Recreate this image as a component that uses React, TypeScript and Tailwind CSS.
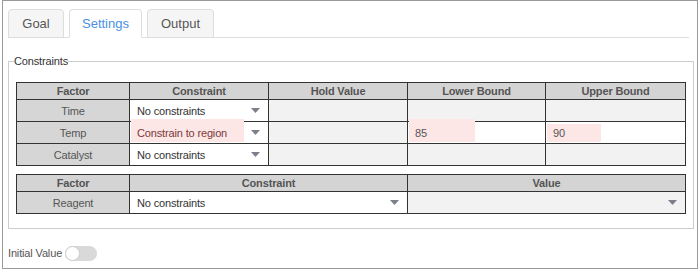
const Arrow = () => (
  <svg width="9" height="5" viewBox="0 0 9 5" className="shrink-0">
    <path d="M0 0 L9 0 L4.5 5 Z" fill="#7a7f8a" />
  </svg>
);

const SelectCell = ({ value, error }: { value: string; error?: boolean }) => (
  <td className="border border-[#333] bg-white p-0 h-[22px]">
    <div className="relative flex items-center justify-between h-full pl-[7px] pr-[8px]">
      {error && <div className="absolute left-[1px] top-[-3px] bottom-[1px] w-[113px] bg-[#fde6e6]" />}
      <span className={`relative ${error ? "text-[#7a3a3a]" : "text-[#333]"}`}>{value}</span>
      <Arrow />
    </div>
  </td>
);

const Disabled = () => <td className="border border-[#333] bg-[#f2f2f2] p-0 h-[22px]" />;

const InputCell = ({ value, w, top }: { value: string; w: string; top: string }) => (
  <td className="border border-[#333] bg-white p-0 h-[22px]">
    <div className="relative flex items-center h-full pl-[7px]">
      <div className={`absolute left-[1px] bottom-[1px] ${w} ${top} bg-[#fde6e6]`} />
      <span className="relative text-[#555]">{value}</span>
    </div>
  </td>
);

const Factor = ({ name }: { name: string }) => (
  <td className="border border-[#333] bg-[#d6d6d6] text-center text-[#555] p-0 h-[22px]">{name}</td>
);

const Th = ({ children }: { children: string }) => (
  <th className="border border-[#333] bg-[#d4d4d4] text-center font-bold text-[#555] p-0 h-[17px]">{children}</th>
);

export default function App() {
  return (
    <div className="w-[700px] h-[270px] bg-white font-['Liberation_Sans',Arial,sans-serif] text-[11px] tracking-[-0.15px]">
      <div className="ml-[2px] w-[696px] h-[269px] border border-[#9a9a9a] pt-[8px] px-[5px]">
        <div className="flex gap-[5px] border-b border-[#ddd] h-[29px] mr-[3px] tracking-normal">
          <div className="w-[56px] h-[29px] bg-[#f5f5f5] border border-[#ddd] rounded-t-[4px] flex items-center justify-center text-[13px] text-[#555]">
            Goal
          </div>
          <div className="w-[73px] h-[29px] bg-white border border-[#ddd] border-b-white rounded-t-[4px] flex items-center justify-center text-[13px] text-[#4a90e2]">
            Settings
          </div>
          <div className="w-[67px] h-[29px] bg-[#f5f5f5] border border-[#ddd] rounded-t-[4px] flex items-center justify-center text-[13px] text-[#555]">
            Output
          </div>
        </div>

        <fieldset className="mt-[16px] mr-[3px] border border-[#ccc] px-[7px] pb-[14px]">
          <legend className="text-[#333] -ml-[2px] px-0 leading-[14px]">Constraints</legend>
          <table className="mt-[14px] border-collapse table-fixed w-[669px] leading-[14px]">
            <colgroup>
              <col className="w-[113px]" />
              <col className="w-[139px]" />
              <col className="w-[139px]" />
              <col className="w-[138px]" />
              <col className="w-[140px]" />
            </colgroup>
            <thead>
              <tr>
                <Th>Factor</Th>
                <Th>Constraint</Th>
                <Th>Hold Value</Th>
                <Th>Lower Bound</Th>
                <Th>Upper Bound</Th>
              </tr>
            </thead>
            <tbody>
              <tr>
                <Factor name="Time" />
                <SelectCell value="No constraints" />
                <Disabled />
                <Disabled />
                <Disabled />
              </tr>
              <tr>
                <Factor name="Temp" />
                <SelectCell value="Constrain to region" error />
                <Disabled />
                <InputCell value="85" w="w-[66px]" top="top-[-3px]" />
                <InputCell value="90" w="w-[54px]" top="top-[2px]" />
              </tr>
              <tr>
                <Factor name="Catalyst" />
                <SelectCell value="No constraints" />
                <Disabled />
                <Disabled />
                <Disabled />
              </tr>
            </tbody>
          </table>

          <table className="mt-[8px] border-collapse table-fixed w-[669px] leading-[14px]">
            <colgroup>
              <col className="w-[113px]" />
              <col className="w-[278px]" />
              <col className="w-[278px]" />
            </colgroup>
            <thead>
              <tr>
                <Th>Factor</Th>
                <Th>Constraint</Th>
                <Th>Value</Th>
              </tr>
            </thead>
            <tbody>
              <tr>
                <Factor name="Reagent" />
                <SelectCell value="No constraints" />
                <td className="border border-[#333] bg-[#f2f2f2] p-0 h-[22px]">
                  <div className="flex items-center justify-end h-full pr-[8px]">
                    <Arrow />
                  </div>
                </td>
              </tr>
            </tbody>
          </table>
        </fieldset>

        <div className="flex items-center mt-[16px] gap-[3px]">
          <span className="text-[#555]">Initial Value</span>
          <div className="relative w-[32px] h-[15px] rounded-full bg-[#d9d9d9]">
            <div className="absolute left-0 top-0 w-[15px] h-[15px] rounded-full bg-white border border-[#ccc]" />
          </div>
        </div>
      </div>
    </div>
  );
}
